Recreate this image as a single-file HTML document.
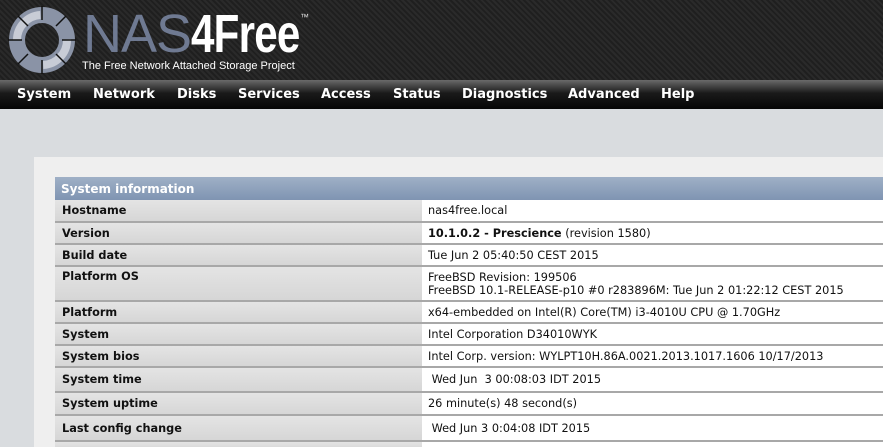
<!DOCTYPE html>
<html style="overflow:hidden"><head><style>
body{margin:0;width:883px;height:447px;overflow:hidden;background:#d9dcdf;font-family:"DejaVu Sans",Verdana,sans-serif;position:relative}
#top{position:absolute;left:0;top:0;width:883px;height:80px;background:repeating-linear-gradient(45deg,#2a2a2a 0 2px,#1f1f1f 2px 4px);}
#nav{position:absolute;left:0;top:80px;width:883px;height:29px;background:linear-gradient(#6a6a6a,#1a1a1a 45%,#050505);}
#nav span{position:absolute;top:7px;color:#fff;font-weight:bold;font-size:13px}
#panel{position:absolute;left:34px;top:157px;width:849px;height:290px;background:#efefef}
table{position:absolute;left:55px;top:177px;width:828px;border-collapse:collapse;font-size:11.3px}
th{height:23px;background:linear-gradient(#9fb0c6,#7f94b2);color:#fff;text-align:left;padding:0 0 0 6px;font-size:12px}
td{border-bottom:2px solid #a8a8a8;padding:0;vertical-align:middle}
td.l{width:360px;background:linear-gradient(#e4e4e4,#d6d6d6);font-weight:bold;padding-left:7px;color:#111}
td.v{background:#fff;padding-left:6px;color:#111}
</style></head><body>
<div id="top">
<svg width="80" height="80" style="position:absolute;left:2px;top:0">
<circle cx="40" cy="40" r="25" fill="none" stroke="#8a93a6" stroke-width="16"/>
<circle cx="40" cy="40" r="25" fill="none" stroke="#c8ccd6" stroke-width="8" stroke-dasharray="38 40"/>
<g stroke="#111" stroke-width="1.5"><line x1="40" y1="6" x2="40" y2="20"/><line x1="40" y1="60" x2="40" y2="74"/><line x1="6" y1="40" x2="20" y2="40"/><line x1="60" y1="40" x2="74" y2="40"/><line x1="16" y1="16" x2="26" y2="26"/><line x1="54" y1="54" x2="64" y2="64"/><line x1="64" y1="16" x2="54" y2="26"/><line x1="26" y1="54" x2="16" y2="64"/></g>
</svg>
<div style="position:absolute;left:83px;top:3px;font-family:'Liberation Sans',sans-serif;font-size:54px;color:#6f7a92;letter-spacing:-1px;white-space:nowrap">NAS<span style="display:inline-block;color:#fff;font-weight:bold;transform:scaleX(0.78);transform-origin:left">4Free</span></div>
<div style="position:absolute;left:300px;top:12px;color:#ddd;font-size:9px;font-family:'Liberation Sans',sans-serif">™</div>
<div style="position:absolute;left:82px;top:60px;color:#fff;font-size:11px;font-family:'Liberation Sans',sans-serif">The Free Network Attached Storage Project</div>
</div>
<div id="nav"><span style="left:17px">System</span><span style="left:93px">Network</span><span style="left:177px">Disks</span><span style="left:238px">Services</span><span style="left:321px">Access</span><span style="left:393px">Status</span><span style="left:462px">Diagnostics</span><span style="left:568px">Advanced</span><span style="left:661px">Help</span></div>
<div id="panel"></div>
<table>
<tr><th colspan="2">System information</th></tr>
<tr style="height:22px"><td class="l">Hostname</td><td class="v">nas4free.local</td></tr>
<tr style="height:22px"><td class="l">Version</td><td class="v"><b>10.1.0.2 - Prescience</b> (revision 1580)</td></tr>
<tr style="height:22px"><td class="l">Build date</td><td class="v">Tue Jun 2 05:40:50 CEST 2015</td></tr>
<tr style="height:35px"><td class="l" style="vertical-align:top;padding-top:3px">Platform OS</td><td class="v">FreeBSD Revision: 199506<br>FreeBSD 10.1-RELEASE-p10 #0 r283896M: Tue Jun 2 01:22:12 CEST 2015</td></tr>
<tr style="height:22px"><td class="l">Platform</td><td class="v">x64-embedded on Intel(R) Core(TM) i3-4010U CPU @ 1.70GHz</td></tr>
<tr style="height:22px"><td class="l">System</td><td class="v">Intel Corporation D34010WYK</td></tr>
<tr style="height:22px"><td class="l">System bios</td><td class="v">Intel Corp. version: WYLPT10H.86A.0021.2013.1017.1606 10/17/2013</td></tr>
<tr style="height:25px"><td class="l">System time</td><td class="v">&nbsp;Wed Jun &nbsp;3 00:08:03 IDT 2015</td></tr>
<tr style="height:23px"><td class="l">System uptime</td><td class="v">26 minute(s) 48 second(s)</td></tr>
<tr style="height:26px"><td class="l">Last config change</td><td class="v">&nbsp;Wed Jun 3 0:04:08 IDT 2015</td></tr>
<tr style="height:10px"><td class="l"></td><td class="v"></td></tr>
</table>
</body></html>
